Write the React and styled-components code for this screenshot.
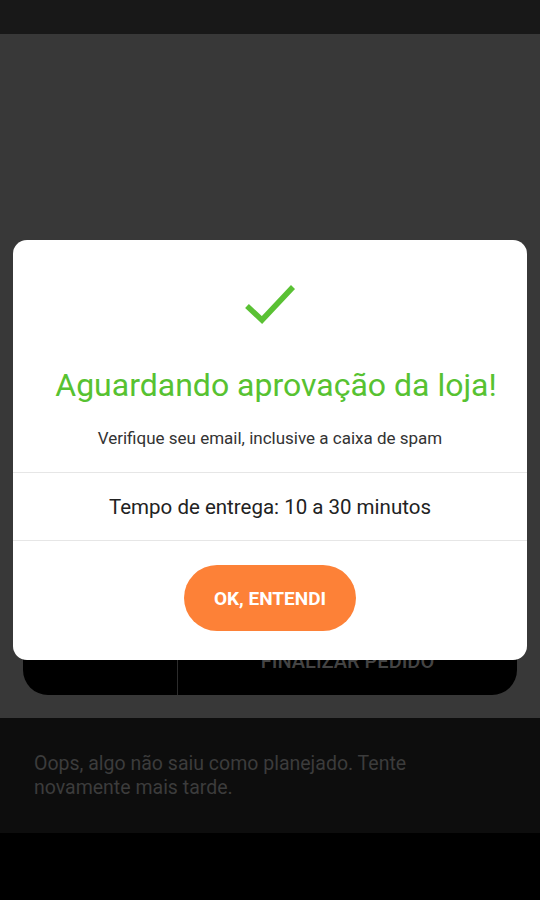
import React from 'react';
import styled, { createGlobalStyle } from 'styled-components';

const GlobalStyle = createGlobalStyle`
    html, body {
        margin: 0;
        padding: 0;
        background: #000;
    }
    * {
        box-sizing: border-box;
    }
`;

const Page = styled.div`
    position: relative;
    width: 540px;
    height: 900px;
    display: flex;
    flex-direction: column;
    font-family: Roboto, "Liberation Sans", sans-serif;
    overflow: hidden;
`;

const StatusBar = styled.div`
    height: 34px;
    background: #181818;
`;

const Content = styled.div`
    flex: 1;
    background: #383838;
    display: flex;
    flex-direction: column;
    justify-content: flex-end;
    padding: 0 23px 23px;
`;

const OrderBar = styled.div`
    height: 80px;
    background: #000;
    border-radius: 25px;
    display: flex;
`;

const OrderSide = styled.div`
    width: 155px;
    border-right: 1px solid #2c2c2c;
`;

const OrderAction = styled.div`
    flex: 1;
    display: flex;
    align-items: center;
    justify-content: center;
    padding-top: 12px;
    color: #444;
    font-size: 20px;
    font-weight: 500;
`;

const Snackbar = styled.div`
    height: 115px;
    background: #0d0d0d;
    padding: 34px 34px 0;
    color: #3c3c3c;
    font-size: 19.5px;
    line-height: 24px;
`;

const NavBar = styled.div`
    height: 67px;
    background: #000;
`;

const Modal = styled.div`
    position: absolute;
    top: 240px;
    left: 13px;
    width: 514px;
    height: 420px;
    background: #fff;
    border-radius: 14px;
    display: flex;
    flex-direction: column;
    align-items: stretch;
`;

const ModalHead = styled.div`
    display: flex;
    flex-direction: column;
    align-items: center;
    padding-top: 43px;
    height: 232px;
`;

const CheckIcon = styled.svg`
    width: 54px;
    height: 42px;
`;

const Title = styled.h2`
    margin: 41px 0 0 12px;
    color: #57c231;
    font-size: 32px;
    font-weight: 400;
    line-height: 38px;
    white-space: nowrap;
`;

const Subtitle = styled.p`
    margin: 23px 0 0;
    color: #333;
    font-size: 17px;
    line-height: 22px;
`;

const Row = styled.div`
    height: 69px;
    border-top: 1px solid #e6e6e6;
    border-bottom: 1px solid #e6e6e6;
    display: flex;
    align-items: center;
    justify-content: center;
    color: #222;
    font-size: 20.5px;
`;

const Footer = styled.div`
    flex: 1;
    display: flex;
    justify-content: center;
    padding-top: 24px;
`;

const OkButton = styled.button`
    width: 172px;
    height: 66px;
    border: none;
    border-radius: 33px;
    background: #fd8137;
    color: #fff;
    font-family: Roboto, "Liberation Sans", sans-serif;
    font-size: 19px;
    font-weight: 700;
`;

const App = () => {
    return (
        <Page>
            <GlobalStyle />
            <StatusBar />
            <Content>
                <OrderBar>
                    <OrderSide />
                    <OrderAction>FINALIZAR PEDIDO</OrderAction>
                </OrderBar>
            </Content>
            <Snackbar>
                Oops, algo não saiu como planejado. Tente<br />
                novamente mais tarde.
            </Snackbar>
            <NavBar />
            <Modal>
                <ModalHead>
                    <CheckIcon viewBox="0 0 54 42">
                        <path d="M4 23 L19 37 L50 4" fill="none" stroke="#5ac134" strokeWidth="5.5" />
                    </CheckIcon>
                    <Title>Aguardando aprovação da loja!</Title>
                    <Subtitle>Verifique seu email, inclusive a caixa de spam</Subtitle>
                </ModalHead>
                <Row>Tempo de entrega: 10 a 30 minutos</Row>
                <Footer>
                    <OkButton>OK, ENTENDI</OkButton>
                </Footer>
            </Modal>
        </Page>
    );
};

export default App;
